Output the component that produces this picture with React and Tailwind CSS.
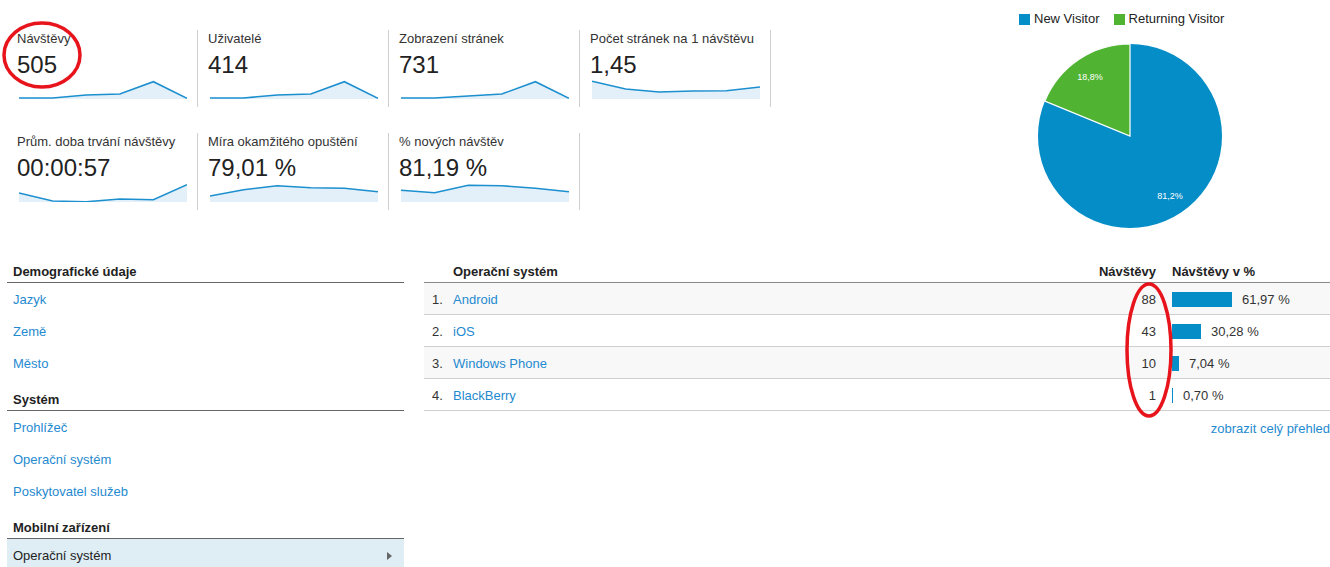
import React from 'react';

const metrics = [
  [
    { label: 'Návštěvy', value: '505', pts: [19, 19, 16, 15, 2.7, 19.3] },
    { label: 'Uživatelé', value: '414', pts: [19, 19, 16, 15, 2.7, 19.3] },
    { label: 'Zobrazení stránek', value: '731', pts: [19, 19, 17, 15, 2.7, 19.3] },
    { label: 'Počet stránek na 1 návštěvu', value: '1,45', pts: [2.3, 10, 13, 12, 11.7, 8] },
  ],
  [
    { label: 'Prům. doba trvání návštěvy', value: '00:00:57', pts: [11, 19, 19.7, 17, 17.7, 2.7] },
    { label: 'Míra okamžitého opuštění', value: '79,01 %', pts: [14, 7.7, 3.7, 5.7, 6.3, 9.7] },
    { label: '% nových návštěv', value: '81,19 %', pts: [8.3, 10.7, 3.3, 3.7, 6.3, 9.7] },
  ],
];

const Sparkline = ({ pts }) => {
  const xs = pts.map((y, i) => [i * 33.6, y]);
  const line = xs.map(([x, y]) => `${x},${y}`).join(' ');
  const area = `0,20 ${line} 168,20`;
  return (
    <svg width="168" height="20" viewBox="0 0 168 20" className="block">
      <polygon points={area} fill="#e4f0f9" />
      <polyline points={line} fill="none" stroke="#1c8fcf" strokeWidth="1.6" />
    </svg>
  );
};

const Metric = ({ m }) => (
  <div className="w-[191px] h-[77px] pl-[10px] border-r border-[#cfcfcf]">
    <div className="text-[13px] leading-[16px] text-[#333] pt-[1px]">{m.label}</div>
    <div className="text-[24px] leading-[28px] text-[#222] mt-[4px]">{m.value}</div>
    <div className="ml-[2px]">
      <Sparkline pts={m.pts} />
    </div>
  </div>
);

const Pie = () => (
  <svg width="186" height="186" viewBox="0 0 186 186" className="block">
    <circle cx="93" cy="93" r="92" fill="#058dc7" />
    <path d="M93,93 L93,1 A92,92 0 0 0 7.9,58.1 Z" fill="#50b432" stroke="#fff" strokeWidth="1.2" />
    <text x="53" y="37" fill="#fff" fontSize="9" textAnchor="middle" fontFamily="Liberation Sans, Arial, sans-serif">18,8%</text>
    <text x="133" y="156" fill="#fff" fontSize="9" textAnchor="middle" fontFamily="Liberation Sans, Arial, sans-serif">81,2%</text>
  </svg>
);

const NavHeader = ({ children }) => (
  <div className="h-[32px] flex items-end pb-[1px] pl-[6px] border-b border-[#666] font-bold text-[13px] text-[#222]">
    {children}
  </div>
);

const NavItem = ({ children }) => (
  <div className="h-[32px] flex items-center pt-[2px] pl-[6px] text-[13px] text-[#1f8ad0]">{children}</div>
);

const rows = [
  { n: '1.', name: 'Android', v: 88, pct: '61,97 %', w: 60 },
  { n: '2.', name: 'iOS', v: 43, pct: '30,28 %', w: 29 },
  { n: '3.', name: 'Windows Phone', v: 10, pct: '7,04 %', w: 7 },
  { n: '4.', name: 'BlackBerry', v: 1, pct: '0,70 %', w: 1 },
];

export default function App() {
  return (
    <div className="relative w-[1330px] h-[567px] overflow-hidden bg-white" style={{ fontFamily: '"Liberation Sans", Arial, sans-serif' }}>
      {/* top */}
      <div className="flex h-[251px]">
        <div className="pl-[7px] pt-[30px] flex flex-col gap-[26px]">
          {metrics.map((row, i) => (
            <div key={i} className="flex">
              {row.map((m) => (
                <Metric key={m.label} m={m} />
              ))}
            </div>
          ))}
        </div>
        <div className="ml-[248px] pt-[12px]">
          <div className="flex items-center text-[13px] text-[#222] h-[14px]">
            <span className="w-[11px] h-[11px] bg-[#058dc7] mr-[4px]" />
            <span>New Visitor</span>
            <span className="w-[11px] h-[11px] bg-[#50b432] ml-[14px] mr-[4px]" />
            <span>Returning Visitor</span>
          </div>
          <div className="ml-[18px] mt-[17px]">
            <Pie />
          </div>
        </div>
      </div>

      {/* bottom */}
      <div className="flex">
        <div className="w-[397px] ml-[7px]">
          <NavHeader>Demografické údaje</NavHeader>
          <NavItem>Jazyk</NavItem>
          <NavItem>Země</NavItem>
          <NavItem>Město</NavItem>
          <NavHeader>Systém</NavHeader>
          <NavItem>Prohlížeč</NavItem>
          <NavItem>Operační systém</NavItem>
          <NavItem>Poskytovatel služeb</NavItem>
          <NavHeader>Mobilní zařízení</NavHeader>
          <div className="h-[32px] flex items-center justify-between pt-[2px] pl-[6px] pr-[12px] bg-[#dfedf5] text-[13px] text-[#222]">
            <span>Operační systém</span>
            <span className="w-0 h-0 border-y-[4px] border-y-transparent border-l-[5px] border-l-[#666]" />
          </div>
        </div>

        <div className="ml-[20px] flex-1">
          <div className="h-[32px] flex items-end pb-[1px] border-b border-[#888] font-bold text-[13px] text-[#222]">
            <span className="pl-[29px] flex-1">Operační systém</span>
            <span className="w-[90px] text-right pr-[16px]">Návštěvy</span>
            <span className="w-[158px]">Návštěvy v %</span>
          </div>
          {rows.map((r, i) => (
            <div
              key={r.n}
              className={`h-[32px] flex items-center pt-[2px] border-b border-[#cfcfcf] text-[13px] ${i % 2 === 0 ? 'bg-[#f8f8f8]' : 'bg-white'}`}
            >
              <span className="w-[29px] pl-[8px] text-[#333]">{r.n}</span>
              <span className="flex-1 text-[#1f8ad0]">{r.name}</span>
              <span className="w-[90px] text-right pr-[16px] text-[#333]">{r.v}</span>
              <span className="w-[158px] flex items-center text-[#333]">
                <span className="h-[15px] bg-[#058dc7]" style={{ width: r.w }} />
                <span className="ml-[10px]">{r.pct}</span>
              </span>
            </div>
          ))}
          <div className="text-right text-[13px] text-[#1f8ad0] mt-[8px]">zobrazit celý přehled</div>
        </div>
      </div>

      {/* red annotation ellipses */}
      <svg className="absolute left-0 top-0 pointer-events-none" width="1330" height="567">
        <ellipse cx="42" cy="55" rx="38" ry="32" fill="none" stroke="#e8141c" strokeWidth="3.5" />
        <ellipse cx="1149" cy="350" rx="22" ry="66" fill="none" stroke="#e8141c" strokeWidth="3.5" />
      </svg>
    </div>
  );
}
